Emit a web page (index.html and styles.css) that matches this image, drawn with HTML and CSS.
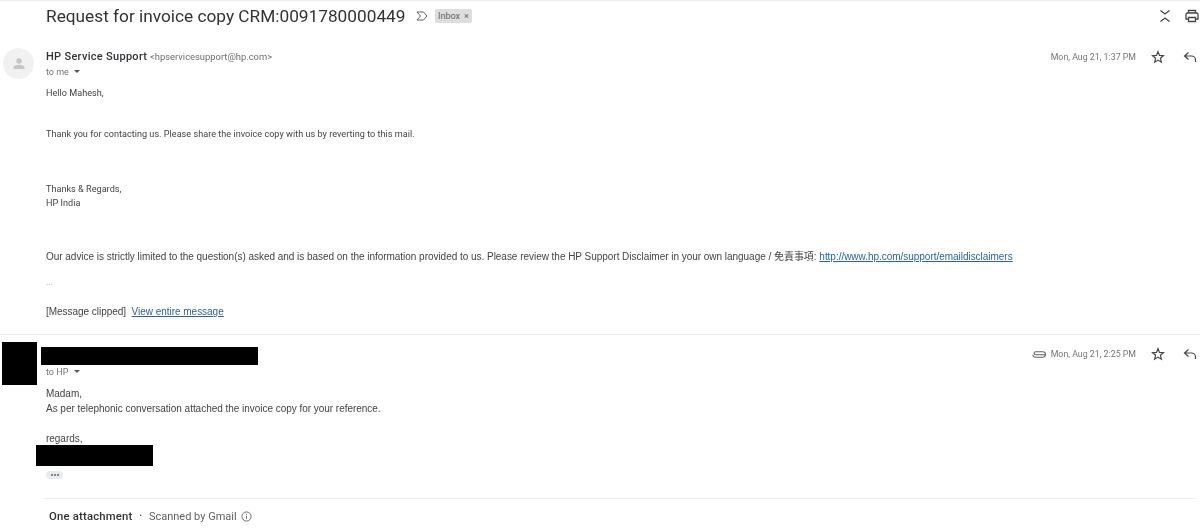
FILE: index.html
```html
<!DOCTYPE html>
<html lang="en">
<head>
<meta charset="utf-8">
<title>Request for invoice copy</title>
<link rel="stylesheet" href="styles.css">
</head>
<body>
<main class="thread">
  <header class="subject-row">
    <h1 class="subject">Request for invoice copy CRM:0091780000449</h1>
    <svg class="marker" viewBox="0 0 12 10" width="12" height="10"><path d="M1 1h6.500l3.500 4-3.500 4H1l3.500-4z" fill="none" stroke="#5f6368" stroke-width="1"/></svg>
    <span class="chip">Inbox<span class="chip-x">×</span></span>
    <div class="subject-actions">
      <svg viewBox="0 0 12 14" width="12" height="14"><path d="M1.500 1.500 6 5l4.500-3.500M1.500 12.500 6 9l4.500 3.500" fill="none" stroke="#444746" stroke-width="1.300"/></svg>
      <svg viewBox="0 0 14 14" width="14" height="14"><path d="M3.500 4V1.500h7V4M3.500 10H1V5.500A1.500 1.500 0 0 1 2.500 4h9A1.500 1.500 0 0 1 13 5.500V10h-2.500M3.500 8.500h7v4h-7z" fill="none" stroke="#444746" stroke-width="1.300"/></svg>
    </div>
  </header>

  <article class="message first">
    <div class="avatar">
      <svg viewBox="0 0 16 16" width="16" height="16"><circle cx="8" cy="5" r="2.700" fill="#c4c7c9"/><path d="M2.500 13v-1.500C2.500 9.500 6 8.700 8 8.700s5.500.8 5.500 2.800V13z" fill="#c4c7c9"/></svg>
    </div>
    <div class="message-main">
      <div class="message-head">
        <div class="sender-block">
          <div class="sender"><strong>HP Service Support</strong> <span class="address">&lt;hpservicesupport@hp.com&gt;</span></div>
          <div class="recipient">to me <span class="caret"></span></div>
        </div>
        <div class="meta">
          <time class="date">Mon, Aug 21, 1:37 PM</time>
          <svg class="star" viewBox="0 0 14 14" width="14" height="14"><path d="M7 1.600 8.500 5.400l4 .3-3.100 2.600 1 3.900L7 10.100l-3.400 2.100 1-3.900L1.500 5.700l4-.3z" fill="none" stroke="#444746" stroke-width="1.200"/></svg>
          <svg class="reply" viewBox="0 0 14 12" width="14" height="12"><path d="M5.500 1.500 1.500 5l4 3.500M1.500 5h7a4 4 0 0 1 4 4v2" fill="none" stroke="#444746" stroke-width="1.200"/></svg>
        </div>
      </div>
      <div class="body">
        <p>Hello Mahesh,</p>
        <p class="gap-m">Thank you for contacting us. Please share the invoice copy with us by reverting to this mail.</p>
        <p class="gap-l">Thanks &amp; Regards,</p>
        <p>HP India</p>
        <p class="gap-d disclaimer">Our advice is strictly limited to the question(s) asked and is based on the information provided to us. Please review the HP Support Disclaimer in your own language / 免責事項: <a href="#">http://www.hp.com/support/emaildisclaimers</a></p>
        <p class="gap-e muted">...</p>
        <p class="gap-c disclaimer">[Message clipped]&nbsp; <a href="#">View entire message</a></p>
      </div>
    </div>
  </article>

  <article class="message second">
    <div class="redact redact-avatar"></div>
    <div class="message-main">
      <div class="message-head">
        <div class="sender-block">
          <div class="redact redact-name"></div>
          <div class="recipient">to HP <span class="caret"></span></div>
        </div>
        <div class="meta">
          <svg class="clip" viewBox="0 0 14 9" width="14" height="9"><path d="M13 4.800H3.600a1.500 1.500 0 0 1 0-3h7.200a2.700 2.700 0 0 1 0 5.400H3.400A2.700 2.700 0 0 1 .8 4.800" fill="none" stroke="#5f6368" stroke-width="1.100"/></svg>
          <time class="date">Mon, Aug 21, 2:25 PM</time>
          <svg class="star" viewBox="0 0 14 14" width="14" height="14"><path d="M7 1.600 8.500 5.400l4 .3-3.100 2.600 1 3.900L7 10.100l-3.400 2.100 1-3.900L1.500 5.700l4-.3z" fill="none" stroke="#444746" stroke-width="1.200"/></svg>
          <svg class="reply" viewBox="0 0 14 12" width="14" height="12"><path d="M5.500 1.500 1.500 5l4 3.500M1.500 5h7a4 4 0 0 1 4 4v2" fill="none" stroke="#444746" stroke-width="1.200"/></svg>
        </div>
      </div>
      <div class="body body-second">
        <p>Madam,</p>
        <p>As per telephonic conversation attached the invoice copy for your reference.</p>
        <p class="gap-r">regards,</p>
        <div class="redact redact-sign"></div>
        <span class="more"><i></i><i></i><i></i></span>
      </div>
      <footer class="attachments">
        <strong>One attachment</strong><span class="dot">•</span><span class="scan">Scanned by Gmail</span>
        <svg viewBox="0 0 12 12" width="11" height="11"><circle cx="6" cy="6" r="5" fill="none" stroke="#5f6368" stroke-width="1"/><path d="M6 5.300v3.200M6 3.200v1" stroke="#5f6368" stroke-width="1"/></svg>
      </footer>
    </div>
  </article>
</main>
</body>
</html>
```
FILE: styles.css
```css
* { box-sizing: border-box; }
html, body { margin: 0; height: 100%; background: #fff; overflow: hidden; }
body { font-family: Roboto, "Liberation Sans", "Noto Sans CJK TC", sans-serif; color: #3c4043; }
.thread { border-top: 1px solid #eceded; filter: blur(0.35px); }
.subject-row { display: flex; align-items: center; height: 30px; padding: 0 1px 0 46px; }
.subject { margin: 0; font-size: 17.250px; font-weight: 400; color: #303336; white-space: nowrap; }
.marker { margin-left: 10px; }
.chip { margin-left: 7px; display: inline-flex; align-items: center; height: 14px; padding: 0 3.500px; background: #dddddd; border-radius: 2px; font-size: 9px; color: #666; }
.chip-x { margin-left: 4px; }
.subject-actions { margin-left: auto; display: flex; align-items: center; gap: 14px; }

.message { display: flex; position: relative; }
.first { height: 304px; padding-top: 19px; border-bottom: 1px solid #e8e8e8; }
.avatar { position: absolute; left: 3px; top: 17px; width: 31px; height: 31px; border-radius: 50%; background: #f1f1f1; display: flex; align-items: center; justify-content: center; }
.message-main { flex: 1; padding-left: 46px; padding-right: 3px; min-width: 0; }
.message-head { display: flex; justify-content: space-between; align-items: flex-start; }
.sender { font-size: 11px; line-height: 14px; white-space: nowrap; }
.sender strong { font-weight: 500; color: #303336; letter-spacing: .3px; }
.address { font-size: 9.400px; color: #6b6e72; }
.recipient { margin-top: 1px; font-size: 9px; line-height: 14px; color: #73767a; }
.caret { display: inline-block; margin-left: 3px; vertical-align: 2px; border: 3px solid transparent; border-top: 3px solid #555; border-bottom: 0; }
.meta { display: flex; align-items: center; height: 14px; }
.date { font-size: 8.800px; color: #73767a; white-space: nowrap; }
.star { margin-left: 15px; }
.reply { margin-left: 18px; }
.clip { margin-right: 5px; }
.body { margin-top: 7px; font-size: 9.100px; letter-spacing: .02px; line-height: 14px; color: #444; }
.body p { margin: 0; white-space: nowrap; }
.body a { color: #2a62ad; }
.body .disclaimer { font-family: "Liberation Sans", "Noto Sans CJK TC", sans-serif; font-size: 10px; letter-spacing: -.03px; }
.body .muted { color: #999; }
.body .gap-m { margin-top: 27px; }
.body .gap-l { margin-top: 41px; }
.body .gap-d { margin-top: 40px; }
.body .gap-e { margin-top: 11px; }
.body .gap-c { margin-top: 16px; }

.second { padding-top: 12px; }
.redact { background: #000; }
.redact-avatar { position: absolute; left: 2px; top: 7px; width: 35px; height: 43px; }
.redact-name { position: relative; left: -5px; width: 217px; height: 18px; }
.second .recipient { margin-top: 0; }
.body-second { font-family: "Liberation Sans", sans-serif; font-size: 10px; letter-spacing: -.03px; line-height: 15px; margin-top: 7px; }
.body .gap-r { margin-top: 15px; }
.redact-sign { margin-top: -1px; margin-left: -10px; width: 117px; height: 21px; }
.more { display: flex; align-items: center; justify-content: center; gap: 1px; width: 17px; height: 8px; margin-top: 5px; background: #e8eaed; border-radius: 4px; }
.more i { width: 2px; height: 2px; border-radius: 50%; background: #5f6368; }
.attachments { display: flex; align-items: center; margin-top: 19px; margin-left: -2px; padding: 5px 0 0 5px; border-top: 1px solid #eeeeee; font-size: 11.300px; height: 30px; }
.attachments strong { font-weight: 500; color: #303336; letter-spacing: .2px; }
.dot { margin: 0 7px; font-size: 7px; color: #555; }
.scan { color: #5f6368; font-size: 11px; }
.attachments svg { margin-left: 4px; }
```
